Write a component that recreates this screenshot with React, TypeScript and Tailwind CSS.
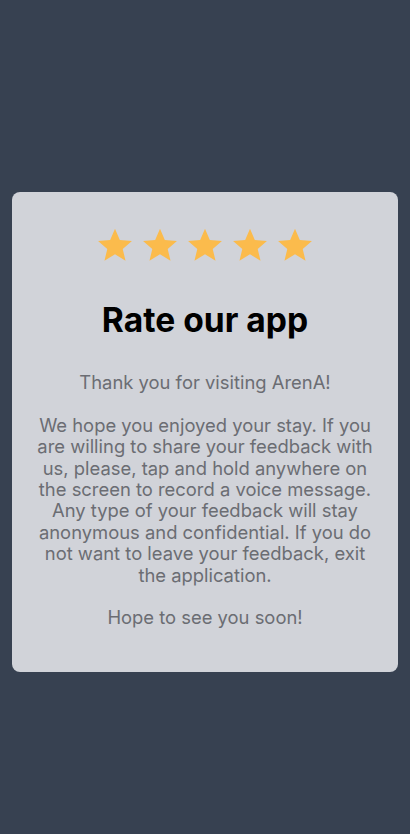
function Star() {
  return (
    <svg viewBox="0 0 24 24" className="w-[38px] h-[38px]" fill="#fbbb4c">
      <path d="M12 1.8l3.05 7.05 7.65.62-5.83 5 1.78 7.48L12 17.9l-6.65 4.05 1.78-7.48-5.83-5 7.65-.62z" />
    </svg>
  );
}

export default function App() {
  return (
    <div className="min-h-[834px] bg-[#374151] px-3 pt-[192px] font-['Inter',sans-serif]">
      <div className="bg-[#d1d3d9] rounded-lg px-5 pt-[34px] pb-[43px] flex flex-col items-center text-center">
        <div className="flex gap-[7px]">
          {[0, 1, 2, 3, 4].map((i) => (
            <Star key={i} />
          ))}
        </div>
        <h1 className="mt-[36px] text-[33.6px] leading-[40px] font-bold text-black">Rate our app</h1>
        <div className="mt-[32px] text-[18.4px] leading-[21.4px] text-[#6b6d73]">
          <p>Thank you for visiting ArenA!</p>
          <p className="mt-[21.4px]">
            We hope you enjoyed your stay. If you are willing to share your feedback with us, please, tap and hold
            anywhere on the screen to record a voice message. Any type of your feedback will stay anonymous and
            confidential. If you do not want to leave your feedback, exit the application.
          </p>
          <p className="mt-[21.4px]">Hope to see you soon!</p>
        </div>
      </div>
    </div>
  );
}
